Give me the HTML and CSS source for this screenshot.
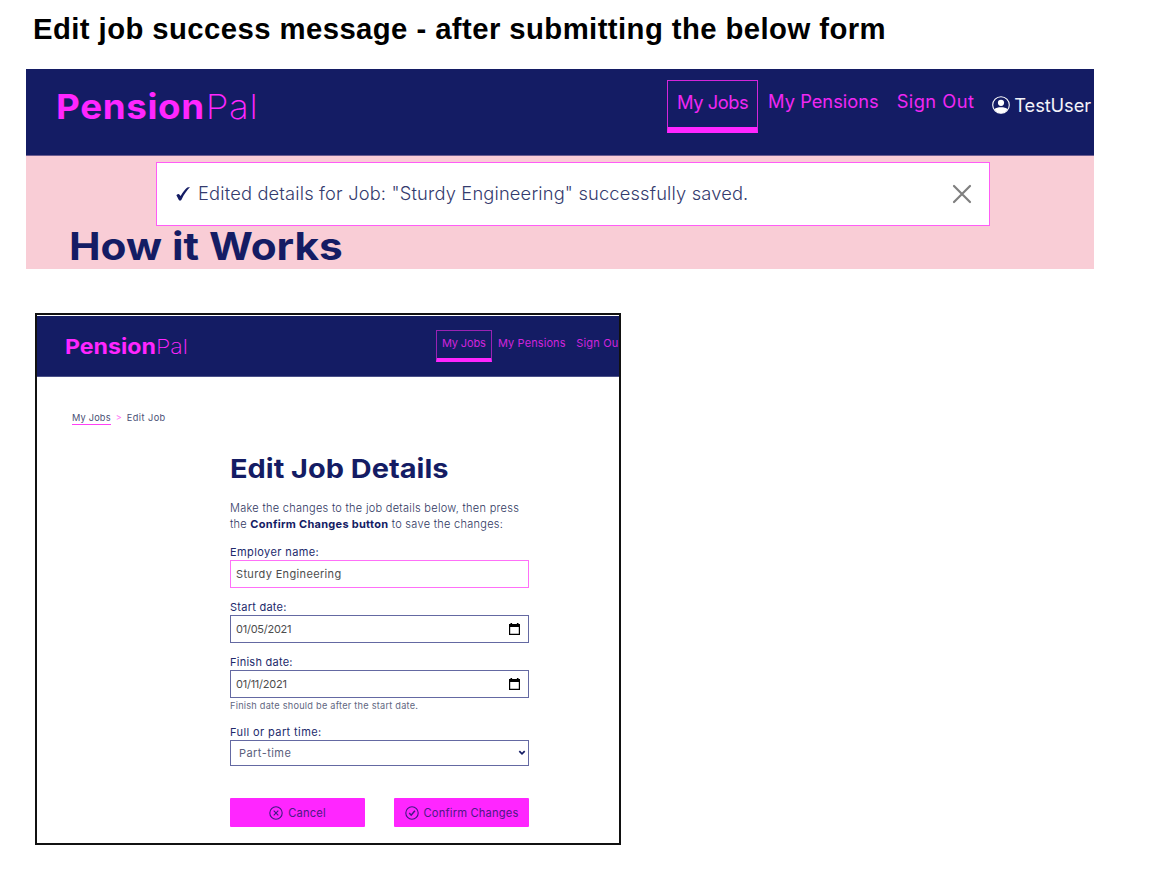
FILE: index.html
```html
<!DOCTYPE html>
<html lang="en">
<head>
<meta charset="utf-8">
<title>Edit job success message</title>
<link rel="stylesheet" href="styles.css">
</head>
<body>
<h1 class="doc-title"><span>Edit job success message - after submitting the below form</span></h1>

<section class="result">
  <header class="bar">
    <div class="logo"><b>Pension</b><span>Pal</span></div>
    <nav class="nav">
      <a class="nav-link nav-active">My Jobs</a>
      <a class="nav-link">My Pensions</a>
      <a class="nav-link nav-out">Sign Out</a>
      <div class="user">
        <svg width="18" height="18" viewBox="0 0 18 18"><circle cx="9" cy="9" r="8.3" fill="none" stroke="#fff" stroke-width="1.1"/><circle cx="9" cy="6.8" r="3.1" fill="#fff"/><path d="M2.3 13.2C3.800 11.700 6.300 11.200 9 11.200s5.200.5 6.700 2C14 15.800 11.800 17.200 9 17.200s-5-1.400-6.700-4z" fill="#fff"/></svg>
        <span>TestUser</span>
      </div>
    </nav>
  </header>
  <div class="alert">
    <svg class="tick" width="14" height="14" viewBox="0 0 14 14"><path d="M.4 8.300C1.200 6.900 2.800 6.400 3.400 7.400L4.600 9C6.800 5.200 9.100 1.900 11.300.4L14 .1C10.700 3.500 8 7.600 5.600 12.400C4.800 13.900 3.400 14 2.700 12.700Z" fill="#141c64"/></svg>
    <span class="alert-text">Edited details for Job: "Sturdy Engineering" successfully saved.</span>
    <svg class="close" width="20" height="20" viewBox="0 0 20 20"><path d="M2 2l16 16M18 2L2 18" stroke="#7f7f7f" stroke-width="2.200" stroke-linecap="round"/></svg>
  </div>
  <h2 class="how"><span class="wide">How it Works</span></h2>
</section>

<section class="frame">
  <header class="bar">
    <div class="logo"><b>Pension</b><span>Pal</span></div>
    <nav class="nav">
      <a class="nav-link nav-active">My Jobs</a>
      <a class="nav-link">My Pensions</a>
      <a class="nav-link nav-out">Sign Ou</a>
    </nav>
  </header>
  <div class="crumbs"><a class="crumb-link">My Jobs</a><span class="sep">&gt;</span><span class="crumb-here">Edit Job</span></div>
  <form class="form">
    <h2 class="form-title"><span class="wide">Edit Job Details</span></h2>
    <p class="intro">Make the changes to the job details below, then press<br>the <b>Confirm Changes button</b> to save the changes:</p>
    <div class="field">
      <label class="label">Employer name:</label>
      <div class="input input-focus"><span>Sturdy Engineering</span></div>
    </div>
    <div class="field">
      <label class="label label-date">Start date:</label>
      <div class="input date"><span>01/05/2021</span><svg width="11" height="12" viewBox="0 0 11 12"><path d="M0 1h1.500V0h1.600v1h4.800V0h1.600v1H11v11H0zM1.200 4v6.800h8.600V4z" fill="#000" fill-rule="evenodd"/></svg></div>
    </div>
    <div class="field">
      <label class="label label-date">Finish date:</label>
      <div class="input date"><span>01/11/2021</span><svg width="11" height="12" viewBox="0 0 11 12"><path d="M0 1h1.500V0h1.600v1h4.800V0h1.600v1H11v11H0zM1.200 4v6.800h8.600V4z" fill="#000" fill-rule="evenodd"/></svg></div>
      <div class="help">Finish date should be after the start date.</div>
    </div>
    <div class="field">
      <label class="label">Full or part time:</label>
      <div class="input select"><span>Part-time</span><svg width="8" height="6" viewBox="0 0 8 6"><path d="M1.300 1.200L4 3.900 6.700 1.200" fill="none" stroke="#141c64" stroke-width="1.700"/></svg></div>
    </div>
    <div class="actions">
      <div class="btn"><svg width="14" height="14" viewBox="0 0 14 14"><g fill="none" stroke="#3f1a80" stroke-width="1.100"><circle cx="7" cy="7" r="6.200"/><path d="M4.700 4.700l4.600 4.600M9.300 4.700L4.700 9.300"/></g></svg><span>Cancel</span></div>
      <div class="btn"><svg width="14" height="14" viewBox="0 0 14 14"><g fill="none" stroke="#3f1a80" stroke-width="1.100"><circle cx="7" cy="7" r="6.200"/><path d="M4.200 7l2 2.200 3.700-4.400" stroke-width="1.500"/></g></svg><span>Confirm Changes</span></div>
    </div>
  </form>
</section>
</body>
</html>
```
FILE: styles.css
```css
* { box-sizing: border-box; }
body { margin: 0; background: #fff; font-family: Inter, "Open Sans", sans-serif; color: #141c64; height: 880px; overflow: hidden; white-space: nowrap; }
svg { display: block; flex: none; }
h1, h2, p { margin: 0; }

.doc-title { height: 69px; padding: 11px 0 0 33px; font: bold 29.300px/36px "Liberation Sans", Arial, sans-serif; letter-spacing: 0.420px; color: #000; }

.bar { display: flex; justify-content: space-between; background: #141c64; color: #ff26ff; }
.logo { transform-origin: 0 50%; }
.logo b { font-weight: 700; }
.logo span { font-weight: 200; }
.nav { display: flex; align-items: flex-start; }
.wide { display: inline-block; transform: scaleX(1.113); transform-origin: 0 50%; }

.result { width: 1068px; height: 200px; margin-left: 26px; background: #f9cdd6; overflow: hidden; }
.result .bar { height: 87px; padding: 11px 3px 0 30px; border-bottom: 1px solid #6d5c90; }
.result .logo { font-size: 34.500px; line-height: 53px; letter-spacing: 0.600px; transform: scaleX(1.065); }
.result .logo span { margin-left: 1px; }
.result .nav-link { height: 53px; font-size: 18.300px; line-height: 40px; color: #f027f3; padding: 0 9px; border: 1px solid transparent; }
.result .nav-active { line-height: 42px; letter-spacing: -0.450px; border-color: #d425da; border-bottom: 6px solid #ff26ff; }
.result .nav-out { padding: 0 8px 0 7px; letter-spacing: 0.450px; }
.user { display: flex; align-items: center; gap: 4px; height: 50px; padding-left: 9px; color: #f3f3f9; font-size: 18.300px; letter-spacing: -0.100px; }
.alert { width: 834px; height: 64px; margin: 6px 0 0 130px; padding: 0 17px 0 19px; display: flex; align-items: center; border: 1.500px solid #ff5cf6; background: #fff; }
.alert-text { margin-left: 8px; padding-bottom: 2px; flex: 1; font-size: 18.300px; font-weight: 300; letter-spacing: 0.170px; color: #343b6e; }
.how { padding-left: 43px; font-size: 38px; font-weight: 700; line-height: 41px; }

.frame { width: 586px; height: 532px; margin: 44px 0 0 35px; border: 2px solid #111; padding-top: 1px; overflow: hidden; }
.frame .bar { height: 61px; padding: 14px 0 0 27.500px; border-bottom: 1px solid #4a5088; }
.frame .logo { font-size: 20.500px; line-height: 33px; transform: scaleX(1.130); }
.frame .nav { width: 183px; flex: none; }
.frame .nav-link { flex: none; height: 32px; padding: 0 5px; font-size: 11px; line-height: 25px; letter-spacing: 0.100px; color: #d024dc; border: 1px solid transparent; }
.frame .nav-active { width: 56px; letter-spacing: -0.150px; border-color: #9a22b4; border-bottom: 4px solid #ff26ff; }
.frame .nav-out { padding: 0 0 0 3.500px; border-right: 0; letter-spacing: 0.200px; }

.crumbs { display: flex; padding: 34px 0 0 35px; font-size: 9.200px; line-height: 13px; color: #4a4f75; }
.crumb-link { letter-spacing: 0.200px; border-bottom: 1.500px solid #ff40f5; }
.crumb-here { letter-spacing: 0.450px; }
.sep { width: 16px; text-align: center; color: #ff70f5; }

.form { width: 299px; margin-left: 193px; padding-top: 26px; }
.form-title { height: 36px; font-size: 26px; font-weight: 700; line-height: 35px; }
.intro { margin-top: 13px; height: 33px; font-size: 11px; line-height: 16px; letter-spacing: 0.280px; font-weight: 300; color: #30375f; }
.intro b { font-weight: 700; color: #141c64; }
.field { margin-top: 12px; }
.label { display: block; height: 15px; font-size: 11px; line-height: 14px; letter-spacing: 0.400px; color: #222a6c; }
.label-date { letter-spacing: 0.250px; }
.input { height: 28px; border: 1px solid #6469a2; padding: 0 8px 1px 5px; display: flex; align-items: center; justify-content: space-between; font-size: 11px; letter-spacing: 0.350px; color: #4d4d4d; }
.date { letter-spacing: -0.250px; }
.input-focus { border-color: #ff70f8; }
.select { height: 26px; padding: 0 2px 1px 8px; letter-spacing: 0.450px; color: #5a5e7c; }
.help { height: 15px; font-size: 9.200px; line-height: 15px; letter-spacing: 0.240px; color: #62677f; }
.actions { display: flex; justify-content: space-between; margin-top: 32px; }
.btn { width: 135px; height: 29px; display: flex; align-items: center; justify-content: center; gap: 5px; background: #ff26ff; font-size: 11.200px; letter-spacing: 0.150px; color: #4d1a85; border-radius: 1px; }
```
